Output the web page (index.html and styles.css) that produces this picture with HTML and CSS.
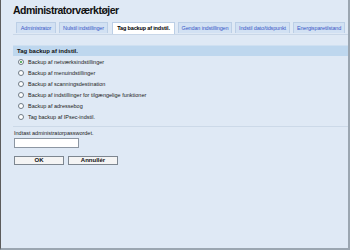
FILE: index.html
```html
<!DOCTYPE html>
<html lang="da">
<head>
    <meta charset="UTF-8">
    <title>Administratorværktøjer</title>
    <link rel="stylesheet" href="styles.css">
</head>
<body>
    <div class="frame">
        <h1 class="title">Administratorværktøjer</h1>

        <!-- tabs -->
        <div class="tabs">
            <span class="tab tab-admin">Administrator</span>
            <span class="tab tab-reset">Nulstil indstillinger</span>
            <span class="tab tab-active">Tag backup af indstil.</span>
            <span class="tab tab-restore">Gendan indstillingen</span>
            <span class="tab tab-date">Indstil dato/tidspunkt</span>
            <span class="tab tab-energy">Energisparetilstand</span>
        </div>

        <div class="section-bar">Tag backup af indstil.</div>

        <ul class="options">
            <li><span class="radio checked"></span>Backup af netværksindstillinger</li>
            <li><span class="radio"></span>Backup af menuindstillinger</li>
            <li><span class="radio"></span>Backup af scanningsdestination</li>
            <li><span class="radio"></span>Backup af indstillinger for tilgængelige funktioner</li>
            <li><span class="radio"></span>Backup af adressebog</li>
            <li><span class="radio"></span>Tag backup af IPsec-indstil.</li>
        </ul>

        <div class="password">
            <label>Indtast administratorpasswordet.</label>
            <div class="pw-input"></div>
        </div>

        <div class="buttons">
            <button>OK</button>
            <button>Annullér</button>
        </div>
    </div>
</body>
</html>
```

FILE: styles.css
```css
body {
    margin: 0;
    padding: 0;
    font-family: "Liberation Sans", Arial, sans-serif;
    background: #dfe9f5;
}
.frame {
    width: 350px;
    height: 250px;
    box-sizing: border-box;
    background: #dfe9f5;
    border-left: 1px solid #5c5c5c;
    border-right: 2px solid #9ba6b1;
    border-bottom: 2px solid #9ba6b1;
    padding: 0 0 0 12px;
}
.title {
    margin: 0;
    padding-top: 4px;
    font-size: 10.5px;
    line-height: 12px;
    font-weight: bold;
    color: #111;
    letter-spacing: -0.5px;
}
.tabs {
    display: flex;
    gap: 3px;
    margin-top: 6px;
    padding-left: 3px;
    border-bottom: 1px solid #c9d7e8;
    height: 12px;
}
.tab {
    display: block;
    box-sizing: border-box;
    height: 11px;
    line-height: 10px;
    text-align: center;
    font-size: 5.5px;
    letter-spacing: -0.15px;
    color: #3a58c8;
    background: #d2e1f3;
    border: 1px solid #bccfe6;
    border-bottom: none;
    white-space: nowrap;
    overflow: hidden;
}
.tab-admin { width: 40px; }
.tab-reset { width: 49px; }
.tab-active {
    width: 63px;
    margin-left: 1px;
    height: 12px;
    background: #ffffff;
    color: #000;
    font-weight: bold;
}
.tab-restore { width: 54px; }
.tab-date { width: 55px; }
.tab-energy { width: 52px; }
.section-bar {
    margin-top: 10px;
    height: 10px;
    line-height: 10px;
    padding-left: 4px;
    background: #bed7ee;
    border-top: 1px solid #cfe0f1;
    font-size: 6px;
    font-weight: bold;
    color: #111;
}
.options {
    list-style: none;
    margin: 0;
    padding: 0 0 4px 5px;
    border-bottom: 1px solid #ccd9e8;
}
.options li {
    display: flex;
    align-items: center;
    height: 11px;
    font-size: 5.5px;
    color: #222;
}
.radio {
    width: 4px;
    height: 4px;
    margin-right: 4px;
    border: 1px solid #6f7a86;
    border-radius: 50%;
    background: #fff;
    position: relative;
}
.radio.checked::after {
    content: "";
    position: absolute;
    left: 1px;
    top: 1px;
    width: 2px;
    height: 2px;
    border-radius: 50%;
    background: #2f9a3a;
}
.password {
    padding-top: 3px;
    padding-left: 1px;
}
.password label {
    display: block;
    font-size: 5.5px;
    line-height: 7px;
    color: #222;
}
.pw-input {
    width: 63px;
    height: 8px;
    margin-top: 1px;
    background: #fff;
    border: 1px solid #8c96a2;
}
.buttons {
    display: flex;
    gap: 4px;
    margin-top: 8px;
    padding-left: 1px;
}
button {
    width: 50px;
    height: 9px;
    padding: 0;
    font-family: inherit;
    font-size: 6px;
    font-weight: bold;
    line-height: 7px;
    color: #111;
    background: #f4f4f4;
    border: 1px solid #7d8690;
}
```
